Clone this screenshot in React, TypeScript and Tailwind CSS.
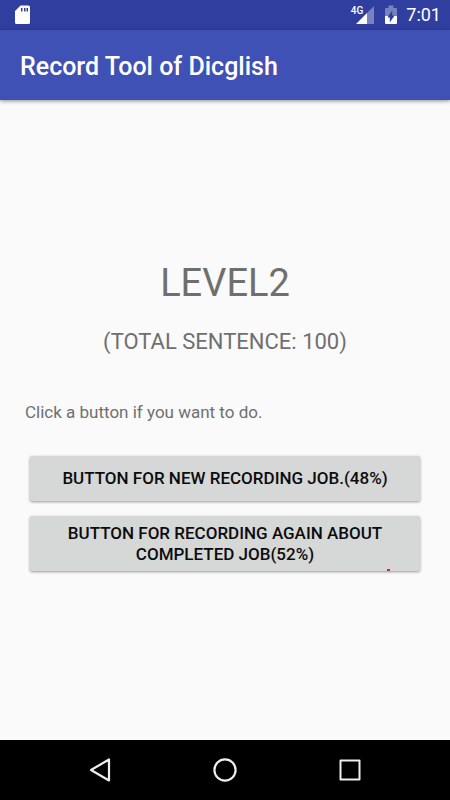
import type { ReactNode } from "react";

/** Status bar with the notification icons on the left and the system icons on the right. */
const StatusBar = () => {
  return (
    <div className="flex items-center justify-between h-[30px] bg-[#303f9f] text-white pl-[14px] pr-[9px]">
      <svg width="17" height="20" viewBox="0 0 17 20" aria-label="SD card">
        <path
          fill="#fff"
          fillRule="evenodd"
          d="M6.500.500h8A1.500 1.500 0 0 1 16 2v15.500a1.500 1.500 0 0 1-1.500 1.500h-12A1.500 1.500 0 0 1 1 17.500V6zM7 3v3.500h1.500V3zM10 3v3.500h1.500V3zM12.500 3v3.500H14V3z"
        />
      </svg>
      <div className="flex items-center">
        <div className="flex items-start">
          <span className="text-[10px] leading-[10px] font-medium">4G</span>
          <svg className="-ml-[8px]" width="20" height="18" viewBox="0 0 20 18" aria-label="Signal">
            <path fill="#fff" fillOpacity="0.35" d="M19 0v18h-7V7z" />
            <path fill="#fff" d="M12 7v11H1z" />
          </svg>
        </div>
        <svg className="ml-[9px] mr-2" width="14" height="20" viewBox="0 0 14 20" aria-label="Battery charging">
          <path
            fill="#fff"
            fillOpacity="0.35"
            d="M4.500.500h5V3H12a1 1 0 0 1 1 1v7H1V4a1 1 0 0 1 1-1h2.500z"
          />
          <path fill="#fff" d="M1 11h12v7a1 1 0 0 1-1 1H2a1 1 0 0 1-1-1z" />
          <path fill="#303f9f" d="M8.200 5.500v5h2.400l-4.800 7v-5H3.400z" />
        </svg>
        <span className="text-[18px] leading-[20px]">7:01</span>
      </div>
    </div>
  );
};

const AppBar = ({ title }: { title: string }) => {
  return (
    <header className="relative flex items-center h-[70px] px-5 pt-[3px] bg-[#3f51b5] shadow-[0_1px_4px_rgba(0,0,0,0.45)]">
      <h1 className="text-[25px] leading-[30px] font-medium text-white">{title}</h1>
    </header>
  );
};

const JobButton = ({ children, className = "" }: { children: ReactNode; className?: string }) => {
  return (
    <button
      type="button"
      className={`relative w-full rounded-[2px] bg-[#d6d7d7] px-7 text-[17px] leading-[21px] font-medium text-[#0c0c0c] uppercase shadow-[0_1px_3px_rgba(0,0,0,0.4)] ${className}`}
    >
      {children}
    </button>
  );
};

/** Back, home and recents buttons. */
const NavigationBar = () => {
  return (
    <nav className="flex items-center justify-center gap-[95px] h-[60px] bg-black">
      <button type="button" aria-label="Back" className="w-[30px]">
        <svg className="block" width="30" height="30" viewBox="0 0 30 30" fill="none" stroke="#eee" strokeWidth="2.200" strokeLinejoin="round">
          <path d="M24 4.500v21L6 15z" />
        </svg>
      </button>
      <button type="button" aria-label="Home" className="w-[30px]">
        <svg className="block" width="30" height="30" viewBox="0 0 30 30" fill="none" stroke="#eee" strokeWidth="2.200">
          <circle cx="15" cy="15" r="10.600" />
        </svg>
      </button>
      <button type="button" aria-label="Recents" className="w-[30px]">
        <svg className="block" width="30" height="30" viewBox="0 0 30 30" fill="none" stroke="#eee" strokeWidth="2" strokeLinejoin="round">
          <rect x="5.500" y="5.500" width="19" height="19" />
        </svg>
      </button>
    </nav>
  );
};

export default function App() {
  return (
    <div className="flex flex-col min-h-screen bg-[#fafafa] font-['Roboto',sans-serif]">
      <StatusBar />
      <AppBar title="Record Tool of Dicglish" />
      <main className="flex-1 flex flex-col justify-center px-[25px] text-[#6f6f6f]">
        <h2 className="text-center text-[38px] leading-[46px]">LEVEL2</h2>
        <p className="mt-[22px] text-center text-[22px] leading-[28px]">(TOTAL SENTENCE: 100)</p>
        <p className="mt-[44px] text-[17px] leading-[24px]">Click a button if you want to do.</p>
        <div className="flex flex-col gap-[15px] mt-8 mb-[9px] px-[5px]">
          <JobButton className="h-[45px]">Button for new recording job.(48%)</JobButton>
          <JobButton className="h-[55px]">
            Button for recording again about completed job(52%)
            <span className="absolute bottom-0 right-[30px] w-[3px] h-[2px] bg-[#e0186c]"></span>
          </JobButton>
        </div>
      </main>
      <NavigationBar />
    </div>
  );
}
